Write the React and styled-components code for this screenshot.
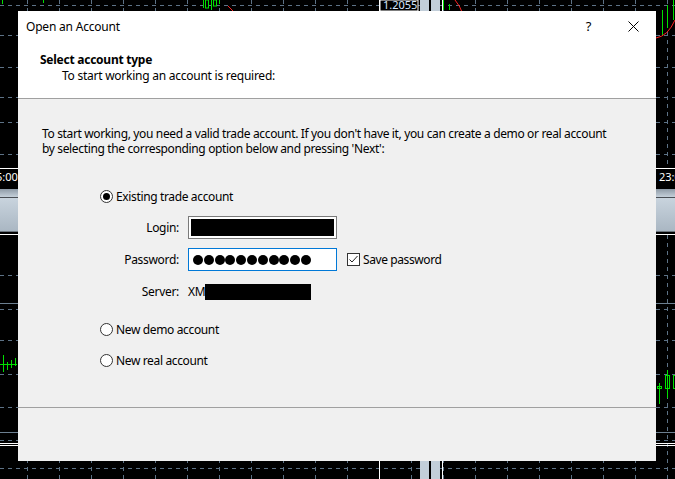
import styled, { createGlobalStyle } from "styled-components";

const GlobalStyle = createGlobalStyle`
  html, body {
    margin: 0;
    padding: 0;
    background: #000;
  }
  body {
    font-family: "Noto Sans", "Open Sans", "DejaVu Sans", sans-serif;
    font-size: 12px;
    color: #000;
  }
`;

// chart that sits behind the dialog (MetaTrader window)
const ChartBackdrop = () => {
    const vx = [];
    for (let x = 27; x < 675; x += 32) vx.push(x);
    const topLines = [5, 35, 67, 97, 122, 154];
    const lowLines = [275, 309, 340, 374, 407, 440, 468];
    return (
        <svg width="675" height="479" viewBox="0 0 675 479" style={{ display: "block" }}>
            <defs>
                <linearGradient id="bar" x1="0" y1="0" x2="0" y2="1">
                    <stop offset="0" stopColor="#8e9aa6" />
                    <stop offset="0.2" stopColor="#c9d4de" />
                    <stop offset="1" stopColor="#a9b6c2" />
                </linearGradient>
            </defs>
            <rect width="675" height="479" fill="#000" />
            <g stroke="#5d7286" strokeWidth="1" strokeDasharray="4 4">
                {vx.map((x) => (
                    <line key={"v" + x} x1={x + 0.5} y1="0" x2={x + 0.5} y2="168" />
                ))}
                {vx.map((x) => (
                    <line key={"w" + x} x1={x + 0.5} y1="235" x2={x + 0.5} y2="479" />
                ))}
                {topLines.map((y) => (
                    <line key={"h" + y} x1="0" y1={y + 0.5} x2="675" y2={y + 0.5} />
                ))}
                {lowLines.map((y) => (
                    <line key={"l" + y} x1="0" y1={y + 0.5} x2="675" y2={y + 0.5} />
                ))}
            </g>
            <line x1="0" y1="432.5" x2="675" y2="432.5" stroke="#6c7f90" />
            <line x1="0" y1="303.5" x2="675" y2="303.5" stroke="#6c7f90" />
            <g stroke="#fff">
                <line x1="0" y1="168.5" x2="675" y2="168.5" />
                <line x1="0" y1="234.5" x2="675" y2="234.5" />
                <line x1="0" y1="443.5" x2="675" y2="443.5" />
                <line x1="0" y1="445.5" x2="675" y2="445.5" />
                <line x1="379.5" y1="0" x2="379.5" y2="12" />
                <line x1="379.5" y1="461" x2="379.5" y2="479" />
                <line x1="442.5" y1="0" x2="442.5" y2="12" />
                <line x1="442.5" y1="461" x2="442.5" y2="479" />
            </g>
            <rect x="0" y="189" width="675" height="43" fill="url(#bar)" />
            <line x1="0" y1="197.5" x2="675" y2="197.5" stroke="#4a4f55" />
            <line x1="0" y1="231.5" x2="675" y2="231.5" stroke="#6b747c" />
            <rect x="420" y="0" width="9" height="12" fill="#c2ced9" />
            <rect x="431" y="0" width="9" height="12" fill="#c2ced9" />
            <rect x="420" y="461" width="9" height="18" fill="#c2ced9" />
            <rect x="431" y="461" width="9" height="18" fill="#c2ced9" />
            <rect x="380" y="0" width="38" height="11" fill="#000" stroke="#fff" />
            <text x="383" y="9" fill="#d8e8ff" fontSize="11" fontFamily="Noto Sans, sans-serif">1.2055</text>
            <text x="-4" y="181" fill="#fff" fontSize="11" fontFamily="Noto Sans, sans-serif">5:00</text>
            <text x="659" y="181" fill="#fff" fontSize="11" fontFamily="Noto Sans, sans-serif">23:0</text>
            <g stroke="#00e000" fill="none" strokeWidth="1">
                <line x1="2.5" y1="0" x2="2.5" y2="4" />
                <line x1="43.5" y1="0" x2="43.5" y2="3" />
                <line x1="203.5" y1="0" x2="203.5" y2="8" />
                <rect x="205.5" y="0" width="3" height="8" />
                <line x1="211.5" y1="0" x2="211.5" y2="10" />
                <rect x="213.5" y="0" width="3" height="6" />
                <line x1="219.5" y1="0" x2="219.5" y2="4" />
                <line x1="443.5" y1="0" x2="443.5" y2="10" />
                <line x1="449.5" y1="4" x2="449.5" y2="10" />
                <line x1="662.5" y1="10" x2="662.5" y2="35" />
                <line x1="667.5" y1="5" x2="667.5" y2="28" />
                <line x1="673.5" y1="0" x2="673.5" y2="20" />
                <line x1="3.5" y1="355" x2="3.5" y2="372" />
                <line x1="7.5" y1="362" x2="7.5" y2="370" />
                <line x1="11.5" y1="360" x2="11.5" y2="368" />
                <line x1="15.5" y1="358" x2="15.5" y2="366" />
                <line x1="0" y1="364.5" x2="17" y2="364.5" />
                <line x1="659.5" y1="383" x2="659.5" y2="404" />
                <rect x="657.5" y="386.5" width="4" height="2" />
                <line x1="667.5" y1="370" x2="667.5" y2="398" />
                <rect x="665.5" y="375.5" width="4" height="13" />
                <rect x="673.5" y="375.5" width="4" height="13" />
            </g>
            <path d="M 228 6 L 236 14" stroke="#ff2020" fill="none" />
            <path d="M 455 0 Q 460 6 462 12" stroke="#ff2020" fill="none" />
            <path d="M 656 38 Q 668 36 675 20" stroke="#ff2020" fill="none" />
        </svg>
    );
};

const Desktop = styled.div`
    position: relative;
    width: 675px;
    height: 479px;
    overflow: hidden;
`;

const Dialog = styled.section`
    position: absolute;
    left: 18px;
    top: 11px;
    width: 638px;
    height: 450px;
    display: flex;
    flex-direction: column;
    background: #f0f0f0;
`;

const TitleBar = styled.header`
    height: 30px;
    display: flex;
    align-items: center;
    background: #fff;
    padding-left: 8px;
`;

const TitleText = styled.span`
    flex: 1;
    font-size: 12px;
    letter-spacing: -0.2px;
`;

const TitleButton = styled.span`
    width: 45px;
    height: 30px;
    display: flex;
    align-items: center;
    justify-content: center;
    font-size: 13px;
`;

const Header = styled.div`
    height: 58px;
    box-sizing: border-box;
    background: #fff;
    border-bottom: 1px solid #a0a0a0;
    padding: 11px 0 0 22px;
`;

const HeaderTitle = styled.div`
    font-weight: 700;
    line-height: 15px;
    letter-spacing: -0.25px;
`;

const HeaderSub = styled.div`
    line-height: 15px;
    padding-top: 1px;
    padding-left: 22px;
    letter-spacing: -0.25px;
`;

const Body = styled.div`
    flex: 1;
    padding: 27px 0 0 24px;
    display: flex;
    flex-direction: column;
`;

const Intro = styled.p`
    margin: 0;
    line-height: 15px;
    letter-spacing: -0.355px;
`;

const Options = styled.div`
    margin: 32px 0 0 58px;
    display: flex;
    flex-direction: column;
`;

const RadioRow = styled.label`
    display: flex;
    align-items: center;
    height: 16px;
    gap: 3px;
    letter-spacing: -0.36px;
    margin-top: ${({ $top }) => $top || 0}px;
`;

const RadioCircle = styled.span`
    width: 11px;
    height: 11px;
    border: 1px solid #333;
    border-radius: 50%;
    background: #fff;
    display: flex;
    align-items: center;
    justify-content: center;
    &::after {
        content: "";
        width: 7px;
        height: 7px;
        border-radius: 50%;
        background: ${({ $checked }) => ($checked ? "#000" : "transparent")};
    }
`;

const Fields = styled.div`
    display: grid;
    grid-template-columns: 79px 149px auto;
    grid-auto-rows: 23px;
    column-gap: 9px;
    row-gap: 9px;
    align-items: center;
    margin: 12px 0 0 0;
`;

const FieldLabel = styled.span`
    text-align: right;
    letter-spacing: -0.3px;
`;

const Input = styled.div`
    height: 23px;
    box-sizing: border-box;
    border: 1px solid ${({ $focused }) => ($focused ? "#0078d7" : "#7a7a7a")};
    background: #fff;
    padding: 2px;
    display: flex;
    align-items: center;
`;

const Redacted = styled.div`
    background: #000;
    height: ${({ $h }) => $h || 17}px;
    width: ${({ $w }) => ($w ? $w + "px" : "100%")};
`;

const Dots = styled.div`
    display: flex;
    gap: 0.8px;
    padding-left: 2px;
`;

const Dot = styled.span`
    width: 10px;
    height: 10px;
    border-radius: 50%;
    background: #000;
`;

const CheckRow = styled.label`
    display: flex;
    align-items: center;
    gap: 3px;
    margin-left: 1px;
    letter-spacing: -0.4px;
`;

const CheckBox = styled.span`
    width: 11px;
    height: 11px;
    border: 1px solid #333;
    background: #fff;
    display: flex;
    align-items: center;
    justify-content: center;
`;

const ServerValue = styled.div`
    display: flex;
    align-items: center;
    height: 23px;
    letter-spacing: -0.3px;
`;

const Footer = styled.footer`
    height: 53px;
    border-top: 1px solid #a0a0a0;
`;

export default function App() {
    return (
        <>
            <GlobalStyle />
            <Desktop>
                <ChartBackdrop />
                <Dialog>
                    <TitleBar>
                        <TitleText>Open an Account</TitleText>
                        <TitleButton>?</TitleButton>
                        <TitleButton>
                            <svg width="11" height="11" viewBox="0 0 11 11">
                                <path d="M0.5 0.5 L10.5 10.5 M10.5 0.5 L0.5 10.5" stroke="#000" strokeWidth="1" />
                            </svg>
                        </TitleButton>
                    </TitleBar>
                    <Header>
                        <HeaderTitle>Select account type</HeaderTitle>
                        <HeaderSub>To start working an account is required:</HeaderSub>
                    </Header>
                    <Body>
                        <Intro>
                            To start working, you need a valid trade account. If you don't have it, you can create a demo or real account
                            <br />
                            by selecting the corresponding option below and pressing 'Next':
                        </Intro>
                        <Options>
                            <RadioRow>
                                <RadioCircle $checked />
                                Existing trade account
                            </RadioRow>
                            <Fields>
                                <FieldLabel>Login:</FieldLabel>
                                <Input>
                                    <Redacted />
                                </Input>
                                <span />
                                <FieldLabel>Password:</FieldLabel>
                                <Input $focused>
                                    <Dots>
                                        {Array.from({ length: 11 }).map((_, i) => (
                                            <Dot key={i} />
                                        ))}
                                    </Dots>
                                </Input>
                                <CheckRow>
                                    <CheckBox>
                                        <svg width="11" height="11" viewBox="0 0 11 11">
                                            <path d="M1.5 5.5 L4 8 L9.5 2" stroke="#222" strokeWidth="1" fill="none" />
                                        </svg>
                                    </CheckBox>
                                    Save password
                                </CheckRow>
                                <FieldLabel>Server:</FieldLabel>
                                <ServerValue>
                                    XM
                                    <Redacted $w={106} $h={16} />
                                </ServerValue>
                                <span />
                            </Fields>
                            <RadioRow $top={18}>
                                <RadioCircle />
                                New demo account
                            </RadioRow>
                            <RadioRow $top={15}>
                                <RadioCircle />
                                New real account
                            </RadioRow>
                        </Options>
                    </Body>
                    <Footer />
                </Dialog>
            </Desktop>
        </>
    );
}
